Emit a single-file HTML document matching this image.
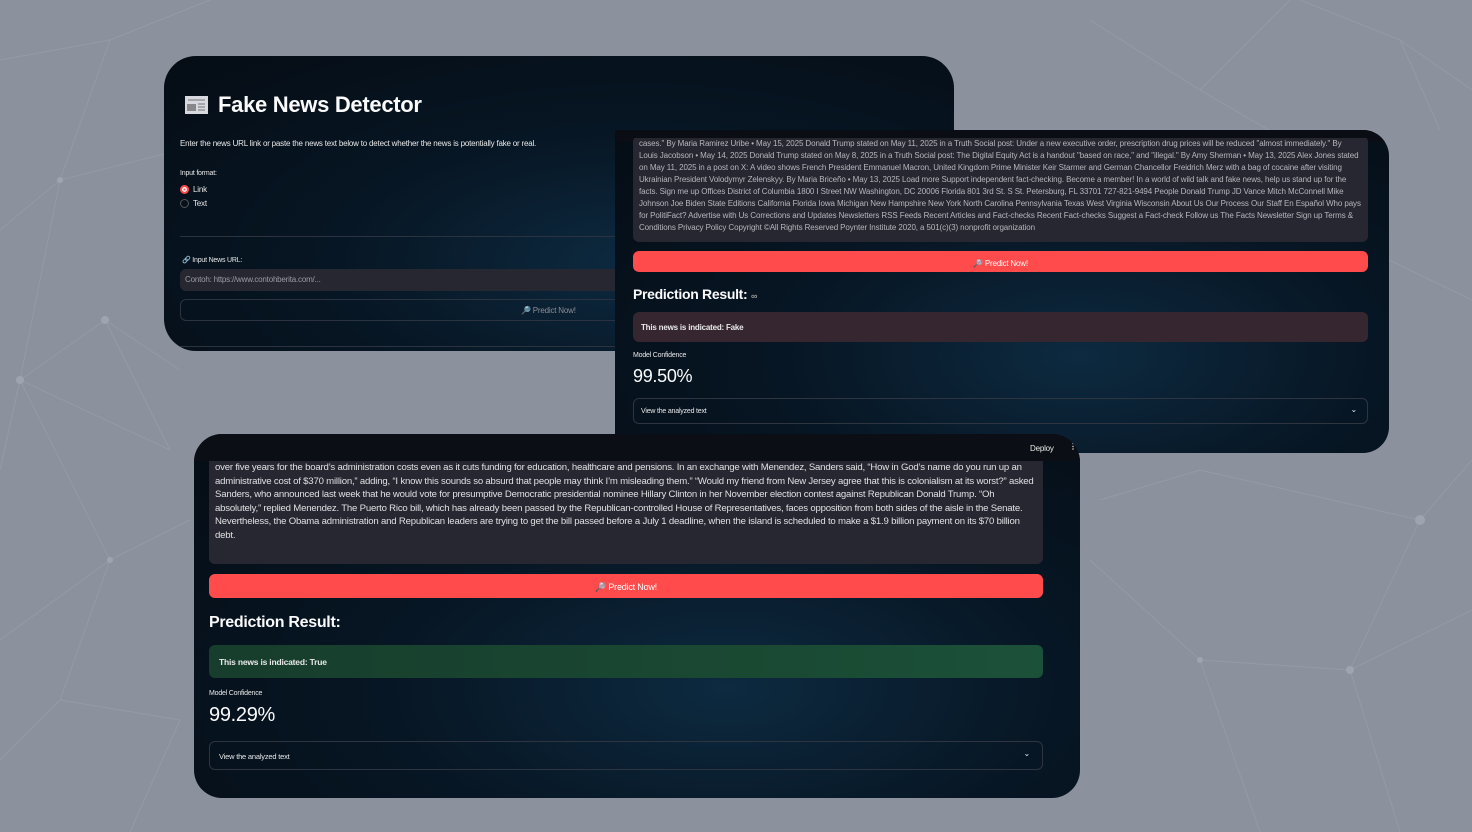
<!DOCTYPE html>
<html><head><meta charset="utf-8"><style>
*{margin:0;padding:0;box-sizing:border-box}
body{width:1472px;height:832px;overflow:hidden;background:#8b919d;font-family:"Liberation Sans",sans-serif;position:relative;color:#fafafa}
.bgsvg{position:absolute;left:0;top:0}
.panel{position:absolute;overflow:hidden;background:radial-gradient(ellipse at 60% 70%,#0d2a40 0%,#071624 45%,#050c14 100%)}
.a{left:164px;top:56px;width:790px;height:295px;border-radius:32px}
.b{left:615px;top:130px;width:774px;height:323px;border-radius:0 26px 26px 0}
.c{left:194px;top:434px;width:886px;height:364px;border-radius:28px}
.abs{position:absolute}
.t{font-size:8px;letter-spacing:-.2px;color:#e8e8e8;white-space:nowrap}
.ta{background:#262730;border-radius:6px;color:#c9c9cf}
.btn{background:#ff4b4b;border-radius:6px;color:#fff;text-align:center}
.exp{border:1px solid #2e3440;border-radius:6px}
</style></head><body>
<svg class="bgsvg" width="1472" height="832" stroke="#a0a6b1" stroke-width="1" fill="none" opacity=".45">
<path d="M0 60 L110 40 L210 0 M110 40 L60 180 L0 230 M60 180 L180 150 M20 380 L60 180 M20 380 L105 320 L170 450 L20 380 L0 470 M105 320 L180 370 M20 380 L110 560 L0 640 M110 560 L190 520 M110 560 L60 700 L0 760 M60 700 L180 720 L130 832 M1420 520 L1350 670 L1472 610 M1420 520 L1472 460 M1350 670 L1200 660 L1090 560 M1200 660 L1260 832 M1350 670 L1400 832 M1420 520 L1200 470 L1100 500 M1400 40 L1472 90 M1400 40 L1300 0 M1400 40 L1440 130 M1090 20 L1200 90 L1290 0 M1200 90 L1389 200 M1472 300 L1389 260"/>
<g fill="#b6bcc7" stroke="none"><circle cx="105" cy="320" r="4"/><circle cx="20" cy="380" r="4"/><circle cx="1420" cy="520" r="5"/><circle cx="1350" cy="670" r="4"/><circle cx="1200" cy="660" r="3"/><circle cx="110" cy="560" r="3"/><circle cx="60" cy="180" r="3"/></g>
</svg>

<div class="panel a">
  <svg class="abs" style="left:20px;top:38px" width="25" height="22"><rect x="1" y="2" width="23" height="18" fill="#d8d8e0"/><rect x="3" y="10" width="9" height="7" fill="#888"/><path d="M4 6h17M14 10h7M14 13h7M14 16h7" stroke="#888" stroke-width="1.3"/></svg>
  <div class="abs" style="left:54px;top:36px;font-size:22px;font-weight:bold;letter-spacing:-.3px">Fake News Detector</div>
  <div class="abs t" style="left:16px;top:83px">Enter the news URL link or paste the news text below to detect whether the news is potentially fake or real.</div>
  <div class="abs t" style="left:16px;top:114px;font-size:7px">Input format:</div>
  <div class="abs" style="left:16px;top:129px;width:9px;height:9px;border-radius:50%;background:#ff4b4b;border:2.5px solid #ff4b4b;box-shadow:inset 0 0 0 1.5px #fff"></div>
  <div class="abs t" style="left:29px;top:129px">Link</div>
  <div class="abs" style="left:16px;top:143px;width:9px;height:9px;border-radius:50%;border:1px solid #555"></div>
  <div class="abs t" style="left:29px;top:143px">Text</div>
  <div class="abs" style="left:16px;top:180px;width:460px;height:1px;background:#2b3340"></div>
  <div class="abs t" style="left:18px;top:200px;font-size:7px">🔗 Input News URL:</div>
  <div class="abs ta" style="left:16px;top:213px;width:460px;height:22px"><span class="t" style="position:absolute;left:5px;top:6px;color:#9a9aa3">Contoh: https://www.contohberita.com/...</span></div>
  <div class="abs" style="left:16px;top:243px;width:460px;height:22px;border:1px solid #2b3340;border-radius:6px"><span class="t" style="position:absolute;left:340px;top:6px;color:#8c8c94">🔎 Predict Now!</span></div>
  <div class="abs" style="left:16px;top:290px;width:460px;height:1px;background:#2b3340"></div>
</div>

<div class="panel b">
  <div class="abs" style="left:0;top:0;width:774px;height:12px;background:#0a0e14"></div>
  <div class="abs ta" style="left:18px;top:6px;width:735px;height:106px;font-size:8px;line-height:12px;padding:2px 6px;color:#b6b6bd;overflow:hidden;letter-spacing:-.1px">cases." By Maria Ramirez Uribe • May 15, 2025 Donald Trump stated on May 11, 2025 in a Truth Social post: Under a new executive order, prescription drug prices will be reduced "almost immediately." By Louis Jacobson • May 14, 2025 Donald Trump stated on May 8, 2025 in a Truth Social post: The Digital Equity Act is a handout "based on race," and "illegal." By Amy Sherman • May 13, 2025 Alex Jones stated on May 11, 2025 in a post on X: A video shows French President Emmanuel Macron, United Kingdom Prime Minister Keir Starmer and German Chancellor Freidrich Merz with a bag of cocaine after visiting Ukrainian President Volodymyr Zelenskyy. By Maria Briceño • May 13, 2025 Load more Support independent fact-checking. Become a member! In a world of wild talk and fake news, help us stand up for the facts. Sign me up Offices District of Columbia 1800 I Street NW Washington, DC 20006 Florida 801 3rd St. S St. Petersburg, FL 33701 727-821-9494 People Donald Trump JD Vance Mitch McConnell Mike Johnson Joe Biden State Editions California Florida Iowa Michigan New Hampshire New York North Carolina Pennsylvania Texas West Virginia Wisconsin About Us Our Process Our Staff En Español Who pays for PolitiFact? Advertise with Us Corrections and Updates Newsletters RSS Feeds Recent Articles and Fact-checks Recent Fact-checks Suggest a Fact-check Follow us The Facts Newsletter Sign up Terms &amp; Conditions Privacy Policy Copyright ©All Rights Reserved Poynter Institute 2020, a 501(c)(3) nonprofit organization</div>
  <div class="abs" style="left:0;top:0;width:774px;height:8px;background:#0a0e14"></div>
  <div class="abs btn" style="left:18px;top:121px;width:735px;height:21px;line-height:21px"><span class="t" style="color:#fff">🔎 Predict Now!</span></div>
  <div class="abs" style="left:18px;top:156px;font-size:14px;font-weight:bold;letter-spacing:-.3px">Prediction Result: <span style="font-size:9px;color:#999">∞</span></div>
  <div class="abs" style="left:18px;top:182px;width:735px;height:30px;background:#362630;border-radius:6px"><span class="t" style="position:absolute;left:8px;top:11px;font-weight:bold">This news is indicated: Fake</span></div>
  <div class="abs t" style="left:18px;top:222px;font-size:7px">Model Confidence</div>
  <div class="abs" style="left:18px;top:236px;font-size:18px;letter-spacing:-.3px">99.50%</div>
  <div class="abs exp" style="left:18px;top:268px;width:735px;height:26px"><span class="t" style="position:absolute;left:7px;top:9px;font-size:7px">View the analyzed text</span><span class="t" style="position:absolute;right:10px;top:6px">⌄</span></div>
</div>

<div class="panel c">
  <div class="abs" style="left:0;top:0;width:886px;height:27px;background:#0b0f15"></div>
  <div class="abs t" style="left:836px;top:10px">Deploy</div>
  <div class="abs t" style="left:875px;top:8px;font-weight:bold">⋮</div>
  <div class="abs ta" style="left:15px;top:27px;width:834px;height:103px;border-radius:0 0 6px 6px;font-size:9.6px;line-height:13.6px;padding:0 6px;color:#e0e0e4;letter-spacing:-.2px;overflow:hidden">over five years for the board’s administration costs even as it cuts funding for education, healthcare and pensions. In an exchange with Menendez, Sanders said, “How in God’s name do you run up an administrative cost of $370 million,” adding, “I know this sounds so absurd that people may think I’m misleading them.” “Would my friend from New Jersey agree that this is colonialism at its worst?” asked Sanders, who announced last week that he would vote for presumptive Democratic presidential nominee Hillary Clinton in her November election contest against Republican Donald Trump. “Oh absolutely,” replied Menendez. The Puerto Rico bill, which has already been passed by the Republican-controlled House of Representatives, faces opposition from both sides of the aisle in the Senate. Nevertheless, the Obama administration and Republican leaders are trying to get the bill passed before a July 1 deadline, when the island is scheduled to make a $1.9 billion payment on its $70 billion debt.</div>
  <div class="abs btn" style="left:15px;top:140px;width:834px;height:24px;line-height:24px"><span class="t" style="font-size:9px;color:#fff">🔎 Predict Now!</span></div>
  <div class="abs" style="left:15px;top:180px;font-size:16px;font-weight:bold;letter-spacing:-.3px">Prediction Result:</div>
  <div class="abs" style="left:15px;top:211px;width:834px;height:33px;background:linear-gradient(90deg,#173d2c,#1a4a33 70%,#1c5139);border-radius:6px"><span class="t" style="position:absolute;left:10px;top:12px;font-weight:bold;font-size:8.5px">This news is indicated: True</span></div>
  <div class="abs t" style="left:15px;top:256px;font-size:7px">Model Confidence</div>
  <div class="abs" style="left:15px;top:270px;font-size:20px;letter-spacing:-.3px">99.29%</div>
  <div class="abs exp" style="left:15px;top:307px;width:834px;height:29px"><span class="t" style="position:absolute;left:9px;top:10px;font-size:7.5px">View the analyzed text</span><span class="t" style="position:absolute;right:12px;top:7px">⌄</span></div>
</div>
</body></html>
